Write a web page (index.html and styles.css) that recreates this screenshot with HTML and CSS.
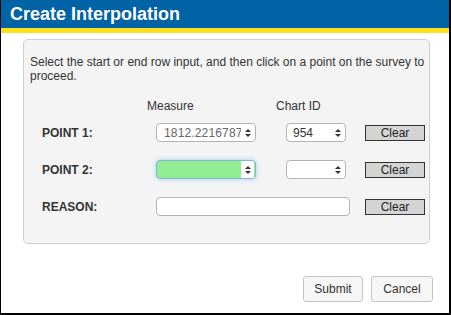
FILE: index.html
```html
<!DOCTYPE html>
<html>
<head>
<meta charset="utf-8">
<link rel="stylesheet" href="styles.css">
</head>
<body>
<div class="dialog">
  <div class="titlebar">Create Interpolation</div>
  <div class="content">
    <div class="panel">
      <p class="intro">Select the start or end row input, and then click on a point on the survey to proceed.</p>
      <div class="heads">
        <div class="colhead head-measure">Measure</div>
        <div class="colhead head-chart">Chart ID</div>
      </div>
      <div class="grid">
        <div class="label">POINT 1:</div>
        <div class="field measure"><span class="val muted">1812.2216787</span><span class="spin"><i class="up"></i><i class="down"></i></span></div>
        <div class="field chart"><span class="val">954</span><span class="spin"><i class="up"></i><i class="down"></i></span></div>
        <button class="clear">Clear</button>

        <div class="label">POINT 2:</div>
        <div class="field measure active"><span class="val"></span><span class="spin"><i class="up"></i><i class="down"></i></span></div>
        <div class="field chart"><span class="val"></span><span class="spin"><i class="up"></i><i class="down"></i></span></div>
        <button class="clear">Clear</button>

        <div class="label">REASON:</div>
        <div class="field reason"></div>
        <button class="clear">Clear</button>
      </div>
    </div>
  </div>
  <div class="footer">
    <button class="btn submit">Submit</button>
    <button class="btn">Cancel</button>
  </div>
</div>
</body>
</html>
```
FILE: styles.css
```css
* { box-sizing: border-box; }
html, body { margin: 0; padding: 0; background: #fff; }
body { font-family: "Liberation Sans", Arial, sans-serif; font-size: 12px; color: #333; }

.dialog {
  width: 451px;
  height: 315px;
  border-left: 1px solid #000;
  border-right: 2px solid #000;
  border-bottom: 2px solid #000;
  display: flex;
  flex-direction: column;
  background: #fff;
}

.titlebar {
  height: 33px;
  background: #0063a6;
  border-bottom: 5px solid #ffe01c;
  color: #fff;
  font-weight: bold;
  font-size: 18px;
  line-height: 28px;
  padding-left: 9px;
}

.content { padding: 6px 19px 0 22px; }

.panel {
  height: 205px;
  border: 1px solid #cfcfcf;
  border-radius: 5px;
  background: #f4f4f4;
  padding: 15px 0 0 6px;
}

.intro {
  margin: 0;
  line-height: 14px;
  color: #333;
}

.heads,
.grid {
  margin-left: 12px;
  display: grid;
  grid-template-columns: 114px 130px 79px 60px;
  align-items: center;
  justify-items: start;
}
.heads { margin-top: 16px; height: 14px; }
.colhead { line-height: 14px; color: #333; }
.head-measure { grid-column: 2; margin-left: -9px; }
.head-chart { grid-column: 3; margin-left: -10px; }

.grid {
  margin-top: 10px;
  grid-auto-rows: 19px;
  row-gap: 18px;
}

.label { grid-column: 1; font-weight: bold; color: #333; }

.field {
  height: 19px;
  background: #fff;
  border: 1px solid #b4b4b4;
  border-radius: 4px;
  display: flex;
  align-items: center;
  overflow: hidden;
}
.field .val {
  flex: 1;
  padding-left: 6px;
  white-space: nowrap;
  overflow: hidden;
  color: #333;
}
.field .val.muted { color: #666; padding-left: 7px; letter-spacing: 0.15px; }
.field .spin {
  width: 13px;
  height: 17px;
  background: #fff;
  display: flex;
  flex-direction: column;
  align-items: center;
  justify-content: center;
  gap: 2px;
  margin-right: 1px;
}
.spin .up { width: 0; height: 0; border-left: 3.5px solid transparent; border-right: 3.5px solid transparent; border-bottom: 3.5px solid #333; }
.spin .down { width: 0; height: 0; border-left: 3.5px solid transparent; border-right: 3.5px solid transparent; border-top: 3.5px solid #333; }

.measure { width: 100px; grid-column: 2; }
.chart { width: 60px; grid-column: 3; }
.reason { width: 194px; grid-column: 2 / span 2; }

.active {
  background: #90ee90;
  border-color: #7fb8d8;
  box-shadow: 0 0 5px rgba(102, 175, 233, 0.55);
}

.clear {
  grid-column: 4;
  width: 60px;
  height: 16px;
  padding: 0;
  font-family: "Liberation Sans", Arial, sans-serif;
  font-size: 12px;
  line-height: 14px;
  color: #222;
  background: #d4d4d4;
  border: 1px solid #333;
  border-radius: 0;
}

.footer {
  margin-top: auto;
  display: flex;
  justify-content: flex-end;
  gap: 8px;
  padding: 0 16px 11px 0;
}
.btn {
  width: 62px;
  height: 26px;
  padding: 0;
  font-family: "Liberation Sans", Arial, sans-serif;
  font-size: 12px;
  color: #333;
  background: #f6f6f6;
  border: 1px solid #c4c4c4;
  border-radius: 3px;
}
.btn.submit { width: 60px; }
```
